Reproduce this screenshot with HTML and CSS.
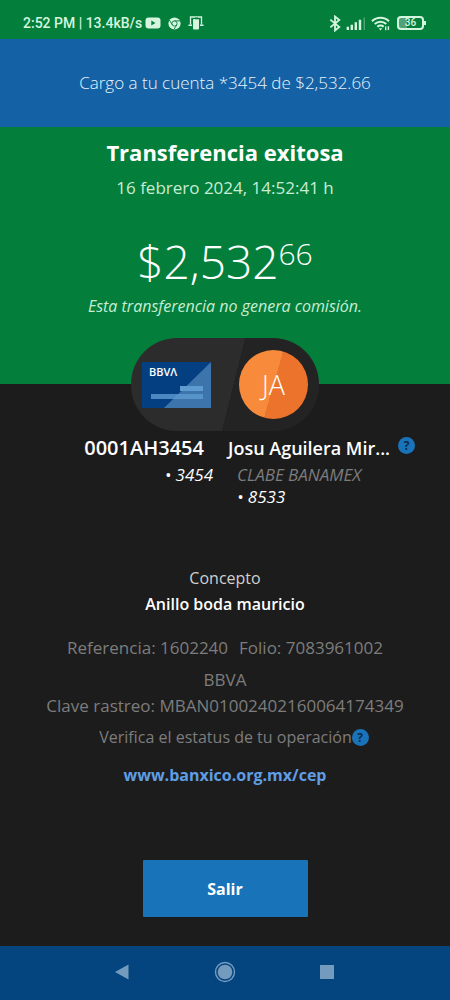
FILE: index.html
```html
<!DOCTYPE html>
<html lang="es">
<head>
<meta charset="utf-8">
<meta name="viewport" content="width=device-width, initial-scale=1">
<title>Transferencia exitosa</title>
<link rel="stylesheet" href="styles.css">
</head>
<body>
<div class="screen">
  <header class="status">
    <div class="status-left">
      <span>2:52 PM | 13.4kB/s</span>
      <svg class="icon-play" width="16" height="12" viewBox="0 0 16 12" aria-hidden="true"><rect x="0.5" y="0.5" width="15" height="11" rx="3" fill="currentColor"/><path d="M6.3 3.5v5l4.2-2.5z" fill="#037f3b"/></svg>
      <svg class="icon-chrome" width="13" height="13" viewBox="0 0 13 13" aria-hidden="true"><circle cx="6.5" cy="6.5" r="6.1" fill="currentColor"/><g stroke="#037f3b" stroke-width="0.9" fill="none"><circle cx="6.5" cy="6.5" r="2.6"/><path d="M6.5 3.9h5.6M4.2 7.8L1.4 3M8.8 7.8L6 12.4"/></g></svg>
      <svg class="icon-cast" width="16" height="14" viewBox="0 0 16 14" aria-hidden="true"><path d="M2.5 8.5V1h11v7.5" fill="none" stroke="currentColor" stroke-width="1.3"/><path d="M0.5 9.2h3.5M12 9.2h3.5" stroke="currentColor" stroke-width="1.4"/><rect x="5" y="3" width="6" height="10.6" rx="1" fill="currentColor"/><path d="M7 1h3v2.6H7z" fill="#037f3b" opacity="0.5"/></svg>
    </div>
    <div class="status-right">
      <svg width="12" height="17" viewBox="0 0 12 17" aria-hidden="true"><path d="M1.3 4.6l9 7.4L6 15.5v-14l4.3 3.5-9 7.4" fill="none" stroke="currentColor" stroke-width="1.8"/></svg>
      <svg width="20" height="13" viewBox="0 0 20 13" aria-hidden="true"><path d="M1.8 9.8V13M5.8 7.8V13M9.8 5.3V13M14 2.8V13" stroke="currentColor" stroke-width="2.4"/><path d="M18.3 0.5V13" stroke="currentColor" stroke-width="1.4" opacity="0.35"/></svg>
      <svg class="icon-wifi" width="20" height="15" viewBox="0 0 20 15" aria-hidden="true"><g fill="none" stroke="currentColor" stroke-width="2"><path d="M1 5.2a12.3 12.3 0 0 1 17 0"/><path d="M3.7 8.1a8.5 8.5 0 0 1 11.6 0"/><path d="M6.3 10.8a4.8 4.8 0 0 1 6.4 0"/></g><path d="M7.7 12.2h3.6l-1.8 2.3z" fill="currentColor"/><path d="M14.7 10.5v3.7M17.4 10.3v3.7" stroke="currentColor" stroke-width="1.4"/></svg>
      <div class="battery"><span>36</span></div>
    </div>
  </header>

  <p class="notice">Cargo a tu cuenta *3454 de $2,532.66</p>

  <main class="content">
    <section class="hero">
      <h1 class="title">Transferencia exitosa</h1>
      <p class="date">16 febrero 2024, 14:52:41 h</p>
      <p class="amount">$2,532<span class="cents">66</span></p>
      <p class="fee">Esta transferencia no genera comisión.</p>
    </section>

    <div class="pill">
      <div class="card">
        <svg class="card-art" viewBox="0 0 69 46" preserveAspectRatio="none" aria-hidden="true"><path d="M69 0v46H22z" fill="#3d74ab"/><rect x="38" y="24" width="23" height="5" fill="#5d9bd1"/><rect x="9" y="32" width="52" height="5" fill="#5d9bd1" opacity="0.8"/></svg>
        <span class="card-brand">BBVΛ</span>
      </div>
      <div class="avatar">JA</div>
    </div>

    <section class="accounts">
      <div class="from">
        <h2 class="name">0001AH3454</h2>
        <p class="sub">• 3454</p>
      </div>
      <div class="to">
        <div class="name-row">
          <h2 class="name">Josu Aguilera Mir...</h2>
          <button class="help" type="button" aria-label="Ayuda sobre la cuenta">?</button>
        </div>
        <p class="sub"><span class="bank">CLABE BANAMEX</span><br>• 8533</p>
      </div>
    </section>

    <section class="details">
      <p class="label">Concepto</p>
      <p class="concept">Anillo boda mauricio</p>
      <p class="refs"><span>Referencia: 1602240</span><span>Folio: 7083961002</span></p>
      <p class="issuer">BBVA</p>
      <p class="tracking">Clave rastreo: MBAN01002402160064174349</p>
      <p class="verify"><span>Verifica el estatus de tu operación</span><button class="help" type="button" aria-label="Ayuda sobre el estatus">?</button></p>
      <a class="link" href="#cep">www.banxico.org.mx/cep</a>
    </section>

    <button class="exit" type="button">Salir</button>
  </main>

  <nav class="nav">
    <button type="button" aria-label="Atrás"><svg width="22" height="22" viewBox="0 0 22 22"><path d="M3 11L16.500 3.500v15z" fill="#739bbd"/></svg></button>
    <button type="button" aria-label="Inicio"><svg width="22" height="22" viewBox="0 0 22 22"><circle cx="11" cy="11" r="9.5" fill="none" stroke="#739bbd" stroke-width="1.4"/><circle cx="11" cy="11" r="7.3" fill="#739bbd"/></svg></button>
    <button type="button" aria-label="Recientes"><svg width="22" height="22" viewBox="0 0 22 22"><path d="M4 4h14v14H4z" fill="#739bbd"/></svg></button>
  </nav>
</div>
</body>
</html>
```
FILE: styles.css
```css
* {
  box-sizing: border-box;
}

body,
h1,
h2,
p {
  margin: 0;
}

body {
  background: #1c1c1c;
  color: #fff;
  font-family: "Open Sans", "Noto Sans", sans-serif;
  font-size: 16px;
  font-weight: 400;
  line-height: 24px;
}

button {
  border: 0;
  padding: 0;
  font-family: inherit;
  cursor: pointer;
}

.screen {
  display: flex;
  flex-direction: column;
  min-height: 100vh;
}

.status {
  display: flex;
  justify-content: space-between;
  align-items: center;
  padding: 13px 26px 6px 23px;
  background: #037f3b;
  color: #d5f5df;
  font-family: Roboto, sans-serif;
  font-size: 14px;
  font-weight: 500;
  line-height: 20px;
}

.status-left,
.status-right {
  display: flex;
  align-items: center;
}

.status-left {
  gap: 7px;
}

.icon-play {
  margin-left: -4px;
}

.status-right {
  gap: 5px;
}

.battery {
  position: relative;
  display: flex;
  justify-content: center;
  align-items: center;
  width: 27px;
  height: 14px;
  margin-left: 1px;
  border: 2px solid currentColor;
  border-radius: 4px;
  background: linear-gradient(90deg, #4fa277 36%, transparent 36%);
  font-size: 10px;
  line-height: 10px;
}

.battery::after {
  content: "";
  position: absolute;
  top: 3px;
  right: -4px;
  width: 2px;
  height: 4px;
  background: currentColor;
}

.notice {
  padding: 32px 16px;
  background: #1462a5;
  color: #e8f2fb;
  font-size: 17px;
  font-weight: 300;
  text-align: center;
}

.content {
  flex: 1;
  display: flex;
  flex-direction: column;
}

.hero {
  padding: 9px 16px 66px;
  background: #037f3b;
  text-align: center;
}

.title {
  font-size: 22px;
  font-weight: 700;
  line-height: 32px;
}

.date {
  margin-top: 8px;
  color: #c8ecd4;
  font-size: 17px;
}

.amount {
  margin-top: 33px;
  font-size: 46px;
  font-weight: 300;
  line-height: 56px;
}

.cents {
  display: inline-block;
  font-size: 30px;
  line-height: 32px;
  vertical-align: 14px;
}

.fee {
  margin-top: 5px;
  color: #c8ecd4;
  font-style: italic;
}

.pill {
  align-self: center;
  display: flex;
  justify-content: space-between;
  align-items: center;
  margin-top: -46px;
  padding: 12px 11px;
  width: 188px;
  border-radius: 46px;
  background: linear-gradient(104deg, #2c2c2c 54%, #232323 54%);
}

.card {
  position: relative;
  width: 69px;
  height: 46px;
  background: #043f82;
}

.card-art {
  display: block;
  width: 100%;
  height: 100%;
}

.card-brand {
  position: absolute;
  top: 4px;
  left: 7px;
  font-size: 11px;
  font-weight: 600;
  line-height: 12px;
}

.avatar {
  width: 69px;
  height: 69px;
  border-radius: 50%;
  background: linear-gradient(106deg, #f78b3b 50%, #ec732c 50%);
  font-size: 27px;
  font-weight: 300;
  line-height: 69px;
  text-align: center;
}

.accounts {
  display: grid;
  grid-template-columns: 1fr 1fr;
  gap: 24px;
  padding: 4px 16px 0;
}

.from {
  text-align: right;
}

.from .name {
  padding-right: 9px;
  font-size: 20px;
}

.name {
  font-size: 18px;
  font-weight: 600;
  line-height: 26px;
  white-space: nowrap;
}

.name-row {
  display: flex;
  align-items: flex-start;
  gap: 8px;
  margin-left: -9px;
}

.name-row .help {
  margin-top: 2px;
}

.sub {
  margin-top: 3px;
  font-size: 17px;
  font-style: italic;
  line-height: 22px;
}

.bank {
  color: #7d7d7d;
}

.help {
  flex: none;
  width: 17px;
  height: 17px;
  border-radius: 50%;
  background: #1973b8;
  color: #0f2a4a;
  font-size: 12px;
  font-weight: 700;
  line-height: 17px;
}

.details {
  display: flex;
  flex-direction: column;
  align-items: center;
  padding: 58px 16px 0;
  color: #7d7d7d;
  text-align: center;
}

.label {
  color: #d0d0d0;
}

.concept {
  margin-top: 2px;
  color: #fff;
  font-weight: 600;
}

.refs,
.issuer,
.tracking {
  font-size: 17px;
}

.refs {
  display: flex;
  gap: 11px;
  margin-top: 20px;
}

.issuer {
  margin-top: 8px;
}

.tracking {
  margin-top: 2px;
}

.verify {
  display: flex;
  align-items: center;
  margin-top: 7px;
  padding-left: 18px;
}

.link {
  margin-top: 14px;
  color: #5f9de4;
  font-weight: 700;
  text-decoration: none;
}

.exit {
  align-self: center;
  width: 165px;
  height: 57px;
  margin: auto 0 29px;
  border-radius: 1px;
  background: #1973b8;
  color: #fff;
  font-size: 16px;
  font-weight: 700;
}

.nav {
  display: flex;
  justify-content: center;
  align-items: center;
  gap: 80px;
  height: 54px;
  padding-bottom: 2px;
  background: #04447f;
}

.nav button {
  width: 22px;
  height: 22px;
  background: none;
}

.nav svg {
  display: block;
}
```
